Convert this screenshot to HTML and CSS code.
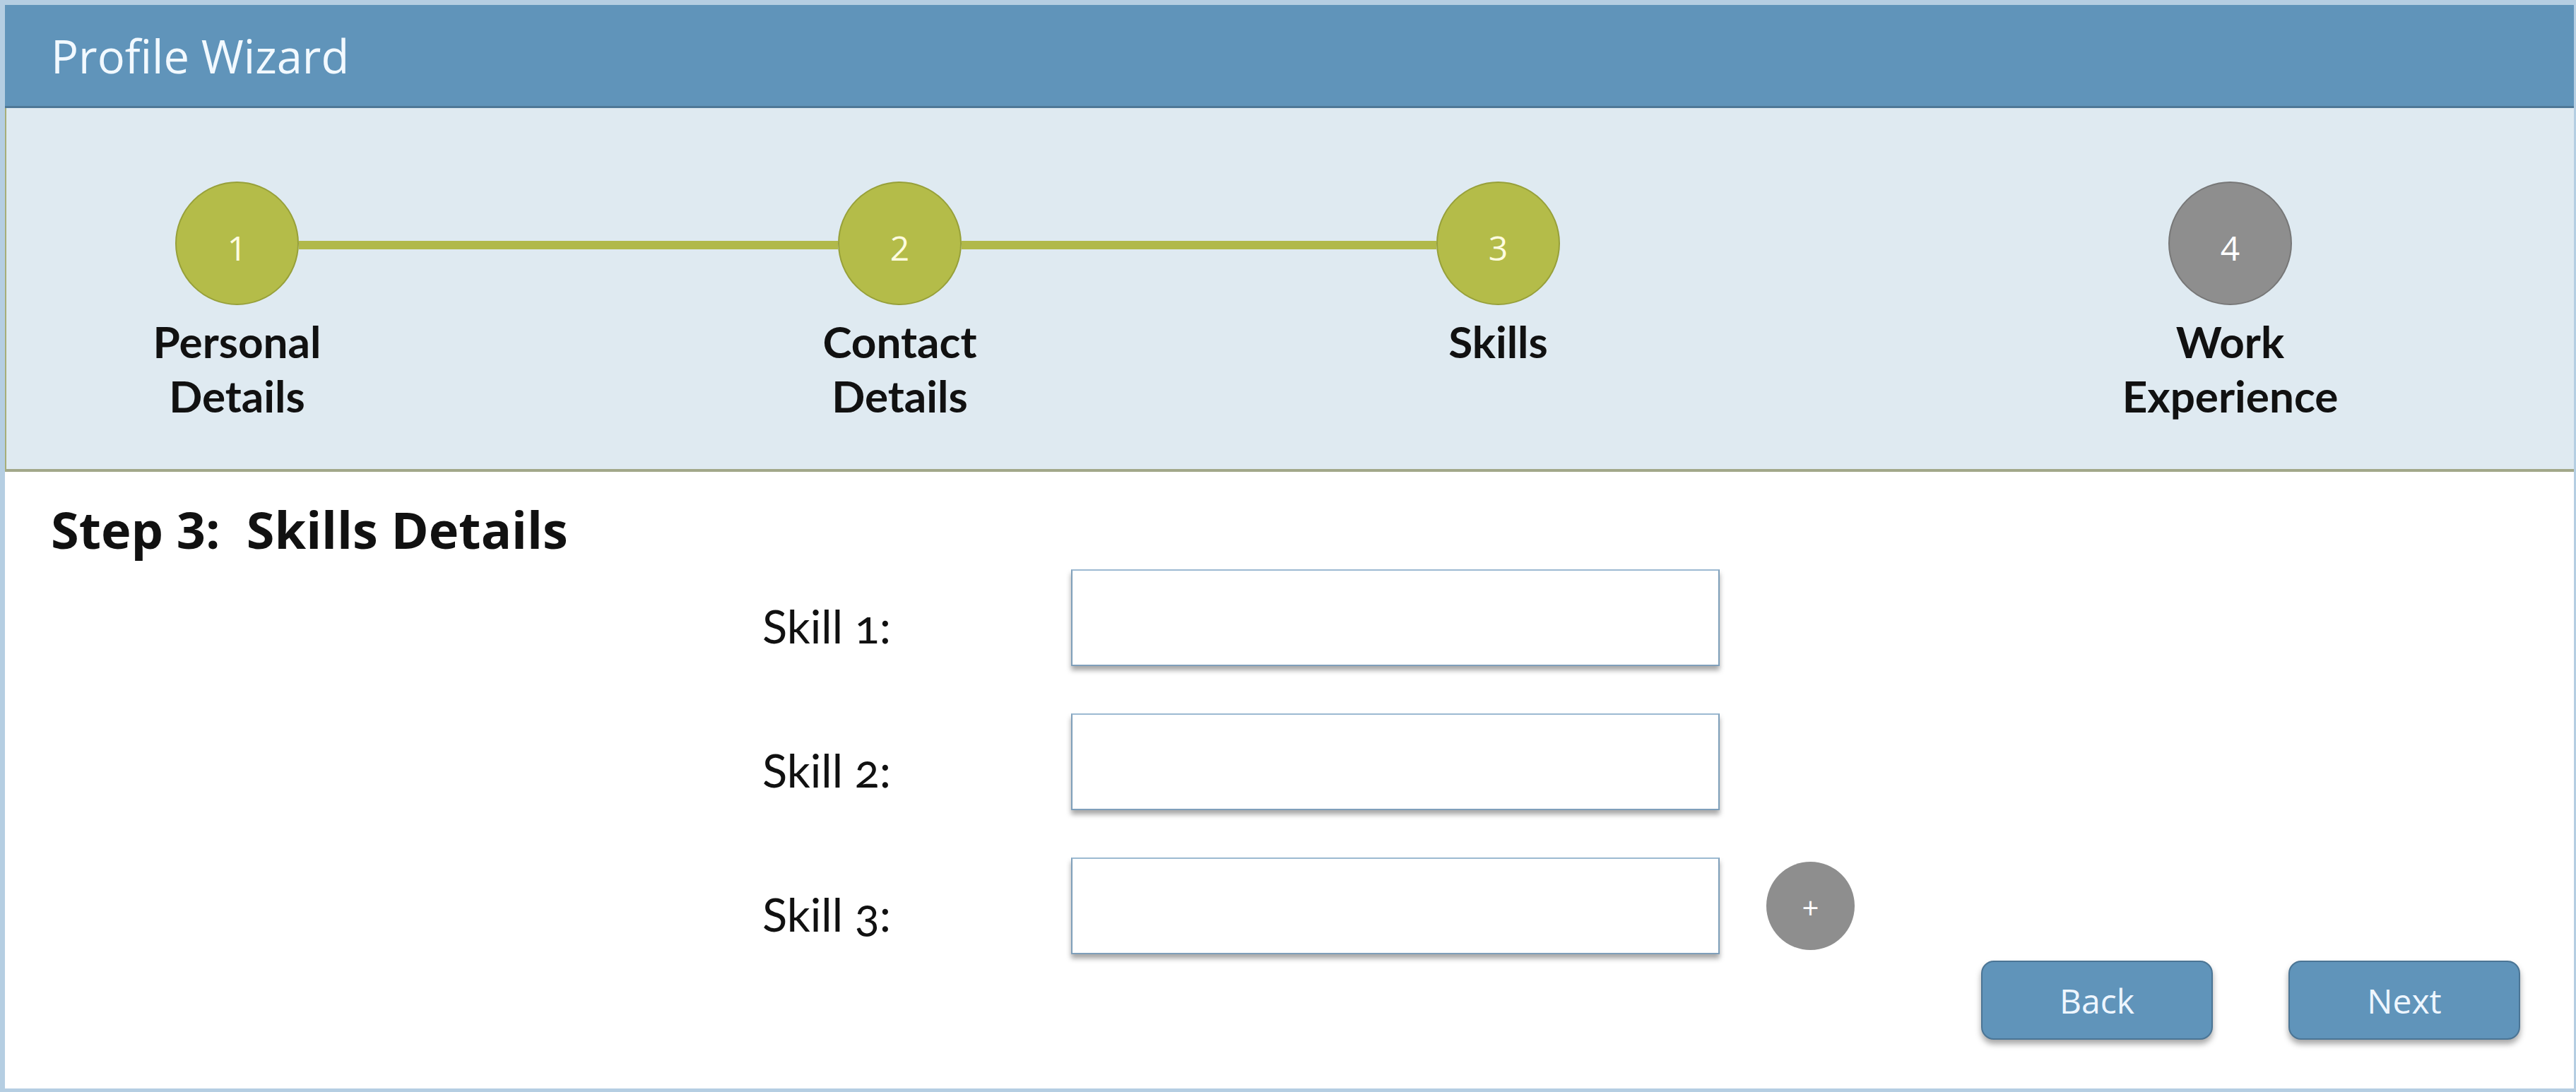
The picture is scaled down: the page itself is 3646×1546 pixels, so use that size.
FILE: index.html
```html
<!DOCTYPE html>
<html lang="en">
<head>
    <meta charset="UTF-8">
    <meta name="viewport" content="width=device-width, initial-scale=1.0">
    <title>Profile Wizard</title>
    <link rel="stylesheet" href="styles.css">
</head>
<body>
    <div class="frame">
        <header class="topbar">Profile Wizard</header>

        <section class="stepper">
            <div class="step done">
                <div class="dot">1</div>
                <div class="step-label">Personal<br>Details</div>
            </div>
            <div class="link link-1"></div>
            <div class="step done">
                <div class="dot">2</div>
                <div class="step-label">Contact<br>Details</div>
            </div>
            <div class="link link-2"></div>
            <div class="step done">
                <div class="dot">3</div>
                <div class="step-label">Skills</div>
            </div>
            <div class="spacer"></div>
            <div class="step todo">
                <div class="dot">4</div>
                <div class="step-label">Work<br>Experience</div>
            </div>
        </section>

        <main class="content">
            <h2 class="step-title">Step 3:&nbsp; Skills Details</h2>
            <div class="skills">
                <label class="skill-label" for="skill1">Skill 1:</label>
                <input class="skill-input" type="text" id="skill1">
                <span></span>

                <label class="skill-label" for="skill2">Skill 2:</label>
                <input class="skill-input" type="text" id="skill2">
                <span></span>

                <label class="skill-label" for="skill3">Skill 3:</label>
                <input class="skill-input" type="text" id="skill3">
                <button class="add-btn" type="button">+</button>
            </div>
            <div class="actions">
                <button class="nav-btn" type="button">Back</button>
                <button class="nav-btn" type="button">Next</button>
            </div>
        </main>
    </div>
</body>
</html>
```

FILE: styles.css
```css
body {
    margin: 0;
    padding: 0;
    background-color: #fff;
    font-family: "Open Sans", "Liberation Sans", sans-serif;
    color: #111;
}
.frame {
    box-sizing: border-box;
    height: 100vh;
    display: flex;
    flex-direction: column;
    border-style: solid;
    border-color: #b5cee2;
    border-width: 7px 3px 5px 7px;
}
.topbar {
    box-sizing: border-box;
    height: 146px;
    display: flex;
    align-items: center;
    padding-left: 65px;
    background-color: #6094ba;
    border-bottom: 3px solid #4e7897;
    color: #f2f9ff;
    font-size: 65px;
    line-height: 1.2;
}
.stepper {
    box-sizing: border-box;
    height: 515px;
    display: flex;
    align-items: flex-start;
    padding: 104px 0 0 239px;
    background-color: #dfeaf1;
    border-left: 2px solid #a8ae78;
    border-bottom: 4px solid #a2a88a;
}
.step {
    width: 175px;
    display: flex;
    flex-direction: column;
    align-items: center;
}
.dot {
    box-sizing: border-box;
    width: 175px;
    height: 175px;
    border-radius: 50%;
    display: flex;
    align-items: center;
    justify-content: center;
    padding-top: 12px;
    font-size: 48px;
}
.done .dot {
    background-color: #b4bc49;
    border: 2px solid #97a03a;
    color: #fffce0;
}
.todo .dot {
    background-color: #8e8e8e;
    border: 2px solid #777;
    color: #fff;
}
.step-label {
    width: 420px;
    flex-shrink: 0;
    margin-top: 13px;
    text-align: center;
    font-family: Lato, "Open Sans", sans-serif;
    font-weight: bold;
    font-size: 62px;
    line-height: 77px;
}
.link {
    height: 12px;
    margin-top: 84px;
    background-color: #b1b94a;
}
.link-1 {
    width: 763px;
}
.link-2 {
    width: 672px;
}
.spacer {
    width: 861px;
}
.content {
    flex: 1;
    padding: 38px 76px 0 65px;
}
.step-title {
    margin: 0;
    font-size: 72px;
    font-weight: bold;
    line-height: 1.2;
}
.skills {
    display: grid;
    grid-template-columns: 437px 918px 125px;
    grid-auto-rows: 137px;
    row-gap: 67px;
    align-items: center;
    margin: 14px 0 0 1007px;
}
.skill-label {
    padding-top: 22px;
    font-family: Lato, "Open Sans", sans-serif;
    font-size: 65px;
    font-variant-numeric: oldstyle-nums;
}
.skill-input {
    box-sizing: border-box;
    width: 918px;
    height: 137px;
    border: 2px solid #7f9fba;
    border-top-color: #9dbad2;
    background-color: #fff;
    box-shadow: 0 6px 7px rgba(0, 0, 0, 0.35);
    outline: none;
}
.add-btn {
    width: 125px;
    height: 125px;
    margin-left: 66px;
    padding: 4px 0 0 0;
    border: none;
    border-radius: 50%;
    background-color: #8e8e8e;
    color: #fff;
    font-family: "Open Sans", sans-serif;
    font-size: 42px;
    cursor: pointer;
}
.actions {
    display: flex;
    justify-content: flex-end;
    gap: 107px;
    margin-top: 9px;
}
.nav-btn {
    width: 328px;
    height: 112px;
    border: 2px solid #4b7595;
    border-radius: 18px;
    background-color: #6094ba;
    box-shadow: 0 6px 8px rgba(0, 0, 0, 0.35);
    color: #eef6ff;
    font-family: "Open Sans", sans-serif;
    font-size: 48px;
    cursor: pointer;
}
```
